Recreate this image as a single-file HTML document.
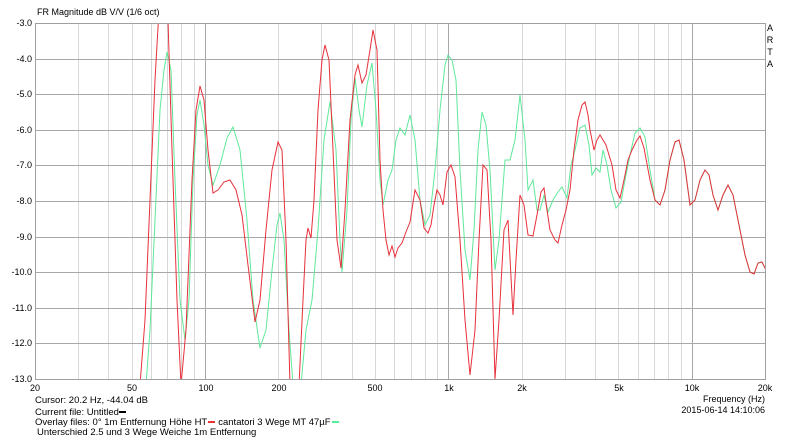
<!DOCTYPE html>
<html><head><meta charset="utf-8"><style>
body{margin:0;background:#fff;width:800px;height:436px;overflow:hidden;font-family:"Liberation Sans",sans-serif;position:relative}
.t{position:absolute;font-size:9.5px;line-height:11px;white-space:nowrap;color:#000}
.m{display:inline-block;width:7px;height:2px;vertical-align:middle;margin:0 3px 0 1px}
</style></head><body>
<svg style="position:absolute;left:0;top:0" width="800" height="436" xmlns="http://www.w3.org/2000/svg" font-family="Liberation Sans, sans-serif" font-size="9" fill="#000">
<rect width="800" height="436" fill="#fff"/>
<g stroke="#d0d0d0" stroke-width="1" id="vg"></g>
<text x="37" y="15" font-size="9">FR Magnitude dB V/V (1/6 oct)</text>
<g text-anchor="end" font-size="9">
<text x="32" y="26">-3.0</text><text x="32" y="62">-4.0</text><text x="32" y="97">-5.0</text><text x="32" y="133">-6.0</text><text x="32" y="168">-7.0</text><text x="32" y="204">-8.0</text><text x="32" y="240">-9.0</text><text x="32" y="275">-10.0</text><text x="32" y="311">-11.0</text><text x="32" y="346">-12.0</text><text x="32" y="382">-13.0</text>
</g>
<g text-anchor="middle" font-size="9">
<text x="35" y="391">20</text><text x="132" y="391">50</text><text x="206" y="391">100</text><text x="279" y="391">200</text><text x="375" y="391">500</text><text x="449" y="391">1k</text><text x="522" y="391">2k</text><text x="619" y="391">5k</text><text x="692" y="391">10k</text><text x="765" y="391">20k</text>
</g>
<g font-size="9" text-anchor="middle"><text x="770" y="31">A</text><text x="770" y="43">R</text><text x="770" y="55">T</text><text x="770" y="67">A</text></g>
<text x="765" y="402" text-anchor="end">Frequency (Hz)</text>
<text x="765" y="413" text-anchor="end">2015-06-14  14:10:06</text>
<svg x="35" y="23" width="731" height="357" viewBox="35 23 731 357" overflow="hidden">
<polyline fill="none" stroke="#5fe89a" stroke-width="1" points="146,385 150,330 155,220 160,110 164,70 167,52 171,70 175,180 180,300 185,340 189,300 193,180 197,115 200,100 204,125 208,165 213,185 220,165 227,138 233,127 240,150 247,220 253,300 260,348 266,330 272,270 277,225 280,213 284,240 289,330 293,385 301,385 306,330 312,300 318,230 324,140 330,102 336,150 340,240 342,272 347,210 351,120 355,78 359,110 362,127 367,85 372,63 376,110 380,180 383,205 388,180 392,170 396,140 400,128 405,135 410,115 415,140 420,200 425,225 430,215 435,170 440,110 445,65 448,55 452,60 456,80 460,170 465,250 470,280 474,230 478,150 482,112 486,125 490,170 495,270 499,240 505,160 510,160 515,140 520,95 525,140 528,190 533,180 537,210 540,210 544,195 548,212 553,200 558,192 562,187 567,198 571,165 575,150 580,128 585,125 589,145 592,175 596,168 600,172 603,150 607,165 611,190 616,208 621,202 625,180 630,155 635,133 640,128 645,137 650,170 655,200 660,205 665,190 670,160 675,142 679,140 684,160 690,205 695,200 700,180 705,170 709,175 713,195 718,210 723,195 728,185 733,195 740,230 745,255 750,272 754,274 758,263 762,262 766,270"/>
<polyline fill="none" stroke="#e8303a" stroke-width="1" points="140,385 145,320 150,200 155,80 159,10 164,0 168,20 172,150 177,300 181,385 186,330 192,180 196,110 200,86 204,100 208,150 213,193 218,190 224,182 230,180 236,190 242,215 248,265 255,322 260,300 266,230 272,170 278,142 282,150 286,240 290,385 299,385 303,300 306,240 308,228 311,238 314,200 318,110 322,60 325,45 329,60 333,150 337,240 341,268 345,210 350,120 355,75 358,65 362,83 366,75 370,50 373,30 377,50 380,160 383,210 386,240 389,255 392,246 395,257 398,248 402,243 406,232 410,222 415,190 420,200 424,228 428,233 431,225 434,205 437,190 440,195 443,205 447,172 451,165 455,177 460,240 465,320 470,375 475,330 479,240 483,165 487,170 491,240 495,379 499,320 504,230 508,220 513,315 516,260 520,195 524,205 528,235 533,236 537,215 541,192 544,188 547,210 550,230 555,240 558,243 562,225 566,210 570,190 574,150 578,120 582,105 585,102 588,115 590,130 594,150 597,140 600,135 603,140 606,145 609,155 612,165 616,190 620,198 624,180 628,160 632,150 637,140 640,136 644,148 650,180 655,200 660,205 665,190 670,160 675,142 679,140 684,160 690,205 695,200 700,180 705,170 709,175 713,195 718,210 723,195 728,185 733,195 740,230 745,255 750,272 754,274 758,263 762,262 766,270"/>
</svg>
<rect x="35.5" y="23.5" width="730" height="356" fill="none" stroke="#a0a0a0"/>
<script>
var g=document.getElementById('vg'),ns='http://www.w3.org/2000/svg';
var fs=[30,40,50,60,70,80,90,100,200,300,400,500,600,700,800,900,1000,2000,3000,4000,5000,6000,7000,8000,9000,10000];
fs.forEach(function(f){var x=Math.round(35+243.33*Math.log10(f/20))+0.5;var l=document.createElementNS(ns,'line');l.setAttribute('x1',x);l.setAttribute('x2',x);l.setAttribute('y1',23);l.setAttribute('y2',379);var major=(f==100||f==1000||f==10000);l.setAttribute('stroke',major?'#a8a8a8':'#d8d8d8');g.appendChild(l);});
for(var i=1;i<10;i++){var y=Math.round(23+35.6*i)+0.5;var l=document.createElementNS(ns,'line');l.setAttribute('x1',35);l.setAttribute('x2',765);l.setAttribute('y1',y);l.setAttribute('y2',y);l.setAttribute('stroke','#a8a8a8');g.appendChild(l);}
</script>
</svg>
<div class="t" style="left:35px;top:395px">Cursor: 20.2 Hz, -44.04 dB</div>
<div class="t" style="left:35px;top:407px">Current file: Untitled<span class="m" style="background:#000;margin-left:0"></span></div>
<div class="t" style="left:35px;top:417px">Overlay files: 0° 1m Entfernung Höhe HT<span class="m" style="background:#e33"></span>cantatori 3 Wege MT 47µF<span class="m" style="background:#5e9"></span></div>
<div class="t" style="left:37px;top:427px">Unterschied 2.5 und 3 Wege Weiche 1m Entfernung</div>
</body></html>
